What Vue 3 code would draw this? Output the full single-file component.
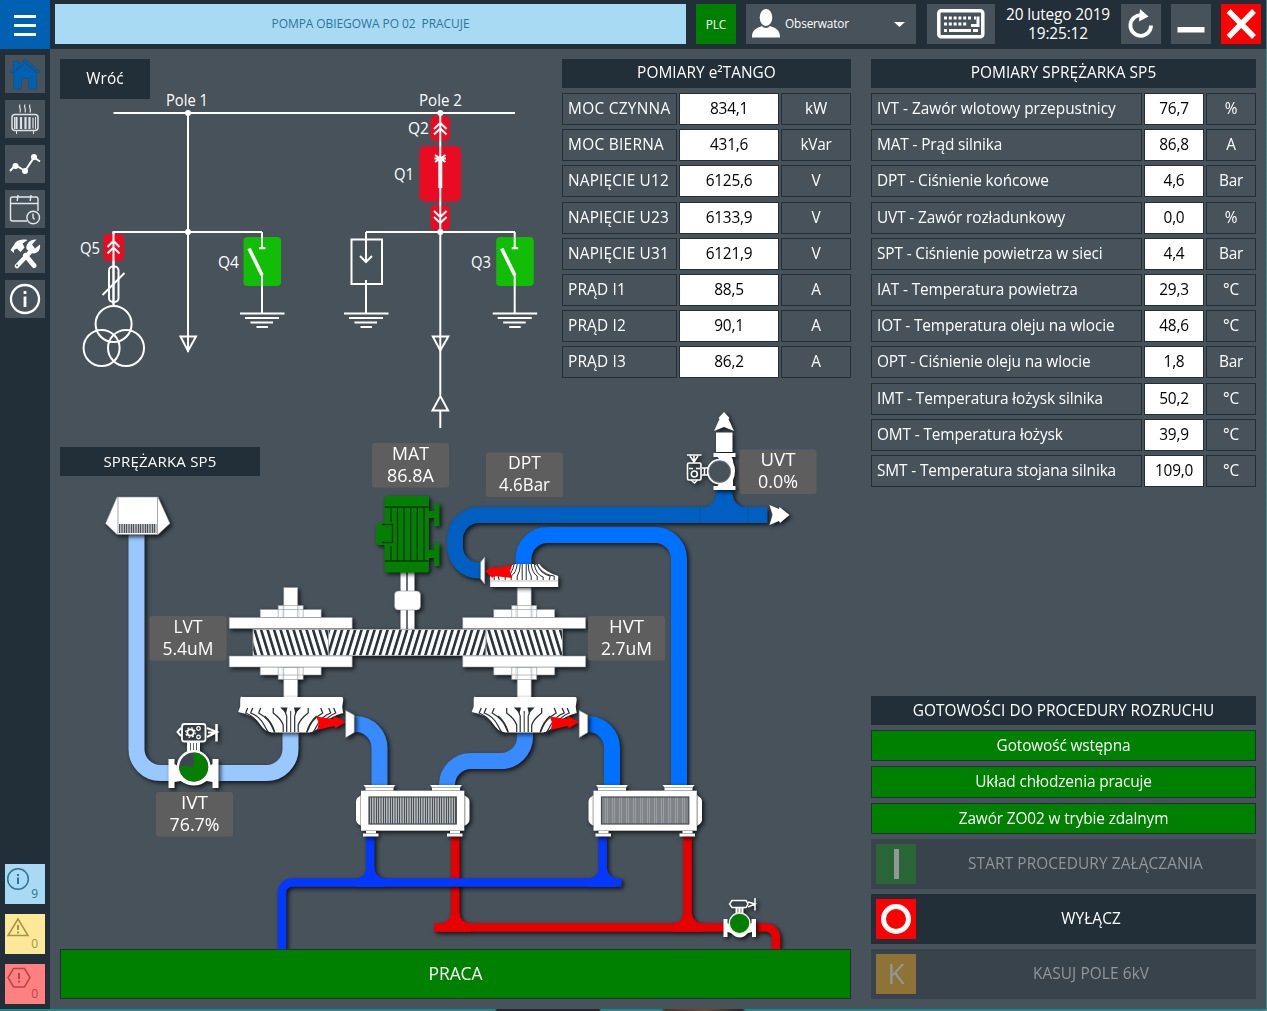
<script setup>
const tango = [
  ['MOC CZYNNA', '834,1', 'kW'],
  ['MOC BIERNA', '431,6', 'kVar'],
  ['NAPIĘCIE U12', '6125,6', 'V'],
  ['NAPIĘCIE U23', '6133,9', 'V'],
  ['NAPIĘCIE U31', '6121,9', 'V'],
  ['PRĄD I1', '88,5', 'A'],
  ['PRĄD I2', '90,1', 'A'],
  ['PRĄD I3', '86,2', 'A'],
]
const compressor = [
  ['IVT - Zawór wlotowy przepustnicy', '76,7', '%'],
  ['MAT - Prąd silnika', '86,8', 'A'],
  ['DPT - Ciśnienie końcowe', '4,6', 'Bar'],
  ['UVT - Zawór rozładunkowy', '0,0', '%'],
  ['SPT - Ciśnienie powietrza w sieci', '4,4', 'Bar'],
  ['IAT - Temperatura powietrza', '29,3', '°C'],
  ['IOT - Temperatura oleju na wlocie', '48,6', '°C'],
  ['OPT - Ciśnienie oleju na wlocie', '1,8', 'Bar'],
  ['IMT - Temperatura łożysk silnika', '50,2', '°C'],
  ['OMT - Temperatura łożysk', '39,9', '°C'],
  ['SMT - Temperatura stojana silnika', '109,0', '°C'],
]
const ready = ['Gotowość wstępna', 'Układ chłodzenia pracuje', 'Zawór ZO02 w trybie zdalnym']

// Value plates placed on the process diagram: x, y, name, value, widths of both texts
const plates = [
  [372, 443, 'MAT', '86.8A', 37, 47],
  [486, 452.5, 'DPT', '4.6Bar', 33, 51],
  [739.5, 449.5, 'UVT', '0.0%', 35, 40],
  [149.5, 616, 'LVT', '5.4uM', 29, 51],
  [588, 616, 'HVT', '2.7uM', 35, 51],
  [156, 792, 'IVT', '76.7%', 27, 50],
]
// Labels of the single line diagram: text, x, y, width
const labels = [
  ['Pole 1', 166, 106, 42],
  ['Pole 2', 419, 106, 43],
  ['Q2', 408, 134, 21],
  ['Q1', 394, 180, 20],
  ['Q5', 80, 254, 20],
  ['Q4', 218, 268, 21],
  ['Q3', 471, 268, 20],
]
const blades = [
  'M-43 708l-2 5q8 3 14 12t9 7',
  'M-38 708l-2 5q9 3 14 13t6 6',
  'M-30 708l-2 5q10 6 13 13t3 6',
  'M-17.500 708v5q8 6 10 12v7',
  'M-26 716q7 6 10 16',
  'M-7 708l3 8v16',
]
const smallBlades = [
  'M-30 580v-4q9 -1 14 -7t6 -5',
  'M-25 580l-1 -4q10 -2 13 -12',
  'M-19 580v-3q7 -2 9 -13',
  'M-13 580v-4q5 -3 6 -12',
  'M-7 580v-4q3 -4 3 -12',
  'M-2 580v-16',
]
</script>

<template>
  <div class="screen">
    <aside class="side">
      <button class="menu"><i></i><i></i><i></i></button>
      <nav>
        <div class="tile">
          <svg viewBox="0 0 40 38"><path fill="#0061b2" stroke="#1d4a75" stroke-width=".6" d="M8.500 17.500L20 8.500l11.500 9V34H23.500V23.500h-7V34H8.500zM20 4.200L35 16.500l-1.600 1.800L20 7.600 6.600 18.300 5 16.500l3.500-3V6h5v3.500z"/></svg>
        </div>
        <div class="tile">
          <svg viewBox="0 0 40 38" fill="none" stroke="#dfe2e4"><rect x="7" y="14.500" width="26" height="16" rx="3" stroke-width="1.500"/><path d="M9.500 17v12M30.500 17v12M11.500 31v3M28.500 31v3"/><path stroke-width="1.200" d="M11 17.500v11h1v-11zM15.500 17.500v11h1v-11zM20 17.500v11h1v-11zM24 17.500v11h1v-11zM28 17.500v11"/><path stroke-width="1.200" d="M15 4.500c-2 3 2 4 0 8M20 4.500c-2 3 2 4 0 8M25 4.500c-2 3 2 4 0 8"/></svg>
        </div>
        <div class="tile">
          <svg viewBox="0 0 40 38" fill="none" stroke="#fff"><path stroke-width="2" d="M5 26l5.500-6 9.500 6L29 12.500l6 4"/><g fill="#fff" stroke="none"><circle cx="10.500" cy="21" r="3"/><circle cx="20" cy="26" r="3"/><circle cx="29" cy="12" r="3"/></g></svg>
        </div>
        <div class="tile">
          <svg viewBox="0 0 40 38" fill="none" stroke="#e4e7e9"><path stroke-width="1.400" d="M22 31H7.500a2 2 0 0 1-2-2V9a2 2 0 0 1 2-2H31a2 2 0 0 1 2 2v12M5.500 13.500H33M13 5l-.8 6M26 5l-.8 6"/><circle cx="28.200" cy="27.500" r="6.300" stroke-width="1.400"/><path stroke-width="1.400" d="M28 23.500v4l1.500 2"/></svg>
        </div>
        <div class="tile">
          <svg viewBox="0 0 40 38" stroke="#fff" stroke-linecap="round"><path fill="none" stroke-width="5" d="M20.500 20.500l8.500 10"/><path fill="#fff" stroke="none" d="M5.500 15l5-7.500c3-3 8-3.500 12-2.500l-5 3.500 2 4-4 4.500-3.500-3.500-3 1.500v3z"/><path stroke-width="4.500" d="M12 31L27 15"/><path fill="#fff" stroke="none" d="M31.500 4.500L27 9.500l3 4 5-4c1 7-4 10-9 8.500L21.500 14c-1-5 3.500-10 10-9.500z"/><circle cx="12" cy="30.500" r="1" fill="#47525b" stroke="none"/></svg>
        </div>
        <div class="tile">
          <svg viewBox="0 0 40 38" fill="none" stroke="#fff"><circle cx="20" cy="19" r="14" stroke-width="2.300"/><path stroke-width="2.800" d="M20 16.500V27M20 11v3"/></svg>
        </div>
      </nav>
      <div class="alerts">
        <div class="alert info"><svg viewBox="0 0 40 40" fill="none" stroke="#2f7396" stroke-width="1.500"><circle cx="13" cy="15" r="10.300"/><path stroke-width="2" d="M13 13.500v6.500M13 10v2"/></svg><span>9</span></div>
        <div class="alert warn"><svg viewBox="0 0 40 40" fill="none" stroke="#a39642" stroke-width="1.500"><path d="M13 5L23 21.500H3z"/><path stroke-width="2" d="M13 11v5M13 17.500v2"/></svg><span>0</span></div>
        <div class="alert err"><svg viewBox="0 0 40 40" fill="none" stroke="#b54646" stroke-width="1.500"><path d="M8.500 4.500h11l5.500 9-5.500 9.500h-11L3 13.500z"/><path stroke-width="2" d="M14 9v6M14 16.500v2"/></svg><span>0</span></div>
      </div>
    </aside>

    <div class="body">
      <header>
        <div class="message">POMPA OBIEGOWA PO 02&nbsp; PRACUJE</div>
        <div class="plc">PLC</div>
        <div class="user">
          <svg width="28" height="30" viewBox="0 0 28 30" fill="#fff"><ellipse cx="14" cy="8.500" rx="6.300" ry="8.500"/><path d="M0 28.500c0-7 3-9 10-11.500 2 2.500 6 2.500 8 0 7 2.500 10 4.500 10 11.500z"/></svg>
          <span>Obserwator</span>
          <svg class="caret" width="11" height="5" viewBox="0 0 11 5"><path fill="#fff" d="M0 0h11L5.500 5z"/></svg>
        </div>
        <div class="keyboard">
          <svg width="48" height="30" viewBox="0 0 48 30"><rect x="1.800" y="1.800" width="44" height="26" rx="2.500" fill="none" stroke="#fff" stroke-width="3.500"/><g fill="none" stroke="#fff" stroke-width="3"><path stroke-dasharray="3 1.800" d="M7 9h28"/><path stroke-dasharray="3 1.800" d="M7 15h24"/><path d="M7 21.500h3M12 21.500h22M36 21.500h5M41 7.500v9h-7M37 9h2"/></g></svg>
        </div>
        <div class="clock"><div>20 lutego 2019</div><div>19:25:12</div></div>
        <div class="sq">
          <svg viewBox="0 0 40 40"><path fill="none" stroke="#fff" stroke-width="3.800" d="M30 21.500A10.300 10.300 0 1 1 21 11.300"/><path fill="#fff" d="M19 5l8.500 7.500-9.500 5z"/></svg>
        </div>
        <div class="sq"><svg viewBox="0 0 40 40"><rect x="6.500" y="23" width="27" height="5.500" fill="#fff"/></svg></div>
        <div class="sq close"><svg viewBox="0 0 40 40"><path stroke="#fff" stroke-width="5.500" d="M7.500 7L33 33M33 7L7.500 33"/></svg></div>
      </header>

      <main>
        <section class="left">
          <div class="stage">
            <svg class="mimic" viewBox="60 59 791 890" width="791" height="890">
              <defs>
                <pattern id="gearL" width="6.500" height="26" patternUnits="userSpaceOnUse" patternTransform="translate(253 629) skewX(17)"><rect width="6.500" height="26" fill="#fff"/><rect width="2.700" height="26" fill="#263038"/></pattern>
                <pattern id="gearR" width="6.500" height="26" patternUnits="userSpaceOnUse" patternTransform="translate(328 629) skewX(-17)"><rect width="6.500" height="26" fill="#fff"/><rect width="2.700" height="26" fill="#263038"/></pattern>
                <pattern id="grill" width="7" height="30" patternUnits="userSpaceOnUse"><rect width="7" height="30" fill="#b4b8bb"/><path stroke="#4b5156" d="M.5 0v30M3 0v30M5.500 0v30"/></pattern>
                <g id="ground"><path d="M-22 313.500h44.500M-17 318h34M-11.500 322.500h22.500M-5.500 327h11.500"/></g>
                <g id="switch"><rect x="-18.500" y="237" width="37.500" height="49" rx="4" fill="#12bd06" stroke="none"/><path d="M0 232v16M-3 248.300h6.500M0 274v39"/><path stroke-width="3.600" d="M-13 248.500L0 275"/></g>
                <g id="hub" fill="#fff" stroke="#8b9298" stroke-width=".6">
                  <path d="M-30.500 609.500h61v8h-61zM-12.500 605.500h25v12h-25zM-7 587.500H7v30H-7zM-30.500 667h61v8h-61zM-12.500 667h25v12.500h-25zM-7 667H7v31H-7z"/>
                  <path d="M-61.500 617.500h123v11h-123zM-61.500 656h123v11h-123z"/>
                  <path stroke="#ccc" d="M-8.500 606v11M8.500 606v11M-8.500 668v11M8.500 668v11"/>
                </g>
                <g id="impeller">
                  <path fill="#fff" d="M-49 697H51q1.500 0 1.500 3l-1 7 1 6q-12 3-19 10t-13 9.500H-20q-6-1-12-9.500t-20.500-11l2-5.500v-6q0-4 1.500-4z"/>
                  <g id="halfBlades" fill="none" stroke="#252c32" stroke-width="1.200"><path v-for="b in blades" :key="b" :d="b"/><path fill="#252c32" d="M-9 708h5l-1 4z"/></g>
                  <use href="#halfBlades" transform="scale(-1 1)"/>
                  <path stroke="#252c32" d="M0 711v21"/>
                  <path fill="#f00" d="M25.500 716.500l17 2.500 1-3L55 722l-10 6-2-2-16.500 4 1.500-7z"/>
                  <path fill="#fff" stroke="#99a0a5" stroke-width=".6" d="M55 710.500l8.500 4.500v17.500l-8.500 5z"/>
                </g>
                <g id="cooler">
                  <path fill="#fff" d="M363.500 785h32l-2 2.500v3h-28v-3zM430 785h32l-2 2.500v3h-28v-3zM366 831h10v2.500h2.500v3h-15.500v-3h3zM450 831h10v2.500h2.500v3h-15.500v-3h3zM361 795.500q-5 2-5 6v18q0 4 5 6zM464.500 795.500q5 2 5 6v18q0 4-5 6z"/>
                  <path fill="none" stroke="#8b9298" stroke-width=".7" d="M365 787.500h29M431.500 787.500h29M365 833.500h12M449 833.500h12M360.500 795v31M465 795v31"/>
                  <rect x="361" y="790.700" width="103.300" height="40" fill="#fff"/>
                  <rect x="369" y="797" width="87.300" height="27" fill="url(#grill)" stroke="#444a4f" stroke-width="1.200"/>
                </g>
              </defs>

              <g fill="none" stroke="#fff" stroke-width="2">
                <path d="M113.500 113H515M188 113v239M113.500 306v-74H262"/>
                <rect x="103.500" y="234" width="20.500" height="27" rx="4.500" fill="#e90b22" stroke="none"/>
                <path d="M113.500 232v74M107.500 247l6-6 6 6M107.500 253.500l6-6 6 6"/>
                <rect x="109" y="266.500" width="9.500" height="35.500" rx="4"/>
                <path d="M102.500 295L124.500 273M180.500 336.500h15.500L188 351z"/>
                <circle cx="113.600" cy="324" r="18"/><circle cx="101.600" cy="348" r="18"/><circle cx="126" cy="348" r="18"/>
                <use href="#switch" x="262"/><use href="#ground" x="262"/>
                <g fill="#e90b22" stroke="none"><rect x="430.500" y="116" width="19.500" height="25" rx="4.500"/><rect x="419.500" y="146" width="41.500" height="55.500" rx="5"/><rect x="430.500" y="205" width="19.500" height="25" rx="4.500"/></g>
                <path d="M440.300 113v282M440.300 411v17M366 232H515M434 129l6.300-6 6.300 6M434 134.500l6.300-6 6.300 6M434 211l6.300 6 6.300-6M434 217l6.300 6 6.300-6M435 155l10.500 7M445.500 155l-10.500 7M434.500 158.500h11.500"/>
                <path stroke-width="4" d="M440.300 160v28"/>
                <path d="M351.500 239.500h30.500v44.500h-30.500zM366 232v30M360 256l6 6 6-6M366 280v33M432.800 336.500h15.500l-8 14zM440.300 396l7.800 14.500h-15.600z"/>
                <use href="#ground" x="366"/><use href="#switch" x="514.700"/><use href="#ground" x="514.700"/>
                <g fill="#fff" stroke="none"><circle cx="188" cy="113" r="3"/><circle cx="188" cy="232" r="3"/><circle cx="440.300" cy="113" r="3"/><circle cx="440.300" cy="232" r="3"/></g>
              </g>
              <text v-for="l in labels" :key="l[0]" class="lbl" :x="l[1]" :y="l[2]" :textLength="l[3]" lengthAdjust="spacingAndGlyphs">{{ l[0] }}</text>

              <g class="shade" fill="none" stroke-width="16">
                <path stroke="#98c8ff" d="M136.500 534V749A24 24 0 0 0 160.500 773H170M218 773H266.500A24 24 0 0 0 290.500 749V732"/>
                <path stroke="#378aff" d="M354 724H356A24 24 0 0 1 379.500 748V786M525 732V737A24 24 0 0 1 501 761H471A24 24 0 0 0 447 785V786"/>
                <path stroke="#0070ff" d="M587 724H589A24 24 0 0 1 612 748V786M523.500 565V559A24 24 0 0 1 547.500 535H655A24 24 0 0 1 679 559V786"/>
                <path stroke="#005fc1" d="M481 570.500H479A24 24 0 0 1 455 546.500V539A24 24 0 0 1 479 515H767.500"/>
                <path fill="#005fc1" d="M716 490h16.500q0 17.500 15.500 17.500v2h-48v-2q16 0 16-17.500z"/>
              </g>
              <path stroke="#0553a3" stroke-width=".7" d="M700 507v16M748 507v16"/>

              <g class="shade">
                <g fill="none" stroke="#e80000" stroke-width="8.500">
                  <path d="M455.300 836V924M687.600 836V924M434 927.500H725M755 927.500H766A10 10 0 0 1 776 937.500V949"/>
                  <path id="teeRed" fill="#e80000" stroke="none" d="M451 913h8.500q1 8 7 9.500l4 1v8.500h-30.500v-8.500l4-1q6-1.500 7-9.500z"/><use href="#teeRed" x="232.400"/>
                </g>
              </g>
              <g class="shade">
                <g fill="none" stroke="#0538ff" stroke-width="8.500">
                  <path d="M370.200 836V880M602.700 836V880M621.500 882.500H292A10 10 0 0 0 282 892.500V949"/>
                  <path id="teeBlue" fill="#0538ff" stroke="none" d="M366 868h8.500q1 8 7 9.500l3 1v8.500h-28v-8.500l3-1q6-1.500 6.500-9.500z"/><use href="#teeBlue" x="232.500"/>
                </g>
              </g>

              <g class="shade">
                <path fill="#fff" stroke="#8b9298" stroke-width=".6" d="M117 497h41l12 26.500-12 11h-41l-11.500-11z"/>
                <path fill="none" stroke="#a3a8ac" d="M118 497v37M157.500 497v37"/>
                <rect x="119" y="524" width="37.500" height="9" fill="url(#grill)"/>
              </g>

              <g class="shade">
                <path fill="#fff" d="M400.500 572h14v57h-14z"/><path stroke="#68717a" stroke-width="2" d="M407 572v57"/>
                <rect x="394.500" y="591" width="26" height="19" rx="4" fill="#fff" stroke="#8b9298" stroke-width=".6"/>
              </g>
              <g class="shade">
                <rect x="253" y="629" width="309" height="27" fill="#fff"/>
                <use href="#hub" x="290.700"/><use href="#hub" x="524.200"/>
              </g>
              <g stroke="#a3a8ac" stroke-width=".8"><rect x="253" y="629.500" width="75.500" height="26" fill="url(#gearL)"/><rect x="328.500" y="629.500" width="157.500" height="26" fill="url(#gearR)"/><rect x="486" y="629.500" width="76.500" height="26" fill="url(#gearL)"/></g>
              <g class="shade"><use href="#impeller" x="290.700"/></g>
              <g class="shade"><use href="#impeller" x="524.200"/></g>

              <g class="shade">
                <g transform="translate(524.200 0)">
                  <path fill="#fff" d="M-12 564h27q6 8 19 12v11h-68v-11q14-2 22-12z"/>
                  <path stroke="#aaa" stroke-width=".7" d="M-34 581h68"/>
                  <g id="smallHalf" fill="none" stroke="#252c32"><path v-for="b in smallBlades" :key="b" :d="b"/></g>
                  <use href="#smallHalf" transform="scale(-1 1)"/>
                  <path fill="#f00" d="M-39 571l8-5 1 2 18-3-2 6 2 7-18-2-2 2z"/>
                  <path fill="#fff" stroke="#99a0a5" stroke-width=".6" d="M-39.500 557v27l-4-5v-17z"/>
                </g>
              </g>

              <g class="shade" fill="#047f04">
                <rect x="384.500" y="496" width="44.500" height="76.500" rx="2.500"/>
                <rect x="376" y="523" width="17" height="22" rx="3"/>
                <path d="M429 511h5v-7.500h5.500V526H434v-8h-5zM429 550h5v-7h5.500v23H434v-8h-5z"/>
              </g>
              <path stroke="#07380c" stroke-width="1.300" fill="none" d="M385 507h43.500M385 561h43.500M391 507v15M391 546v15M397.500 507v54M404 507v54M410.700 507v54M417.300 507v54M424 507v54M382 524.500h10.500v18H382"/>

              <g class="shade">
                <path fill="#fff" d="M168.500 759h6v5l5 3h28l5-3v-5h6v29h-6v-6l-6-1q-12 9-26 0l-6 1v6h-6zM187 741.500h13v10h-13z"/>
                <path fill="none" stroke="#59636b" d="M190.500 743v8M193.500 743v8M196.500 743v8"/>
                <circle cx="193.700" cy="767" r="15.700" fill="#3c474f" stroke="#fff" stroke-width="2.400"/>
                <path fill="#047f04" d="M193.700 767V752.500A14.500 14.500 0 1 1 179.300 765.500z"/>
                <g fill="none" stroke="#fff"><rect x="182" y="724" width="23.500" height="17.500" rx="2.500" stroke-width="1.800"/><path stroke-width="2" d="M181 728l-3.500 4 3.500 4M207 728l10 4-10 5M208 732.500h8"/><path stroke-width="2.500" d="M216.500 724v17.500"/><circle cx="190.500" cy="732.500" r="3.200" stroke-width="1.800"/><circle cx="190.500" cy="732.500" r="4.700" stroke-width="1.300" stroke-dasharray="1.800 1.900"/><circle cx="198.500" cy="728.500" r="1.800" stroke-width="1.300"/><circle cx="198.500" cy="737" r="1.800" stroke-width="1.300"/></g>
              </g>

              <g class="shade">
                <path fill="#fff" d="M724 412l5.500 6-1 1 5.500 12-10-4-10 4 5.500-12-1-1zM716 432.500h16.500V452H716zM713.500 453h22v4h-4q2 3 1.500 5 4 9 0 18v6h2.500v4h-22v-4h4l4-6v-18l-4-5h-4z"/>
                <circle cx="719.700" cy="471.600" r="12" fill="#47525b" stroke="#fff" stroke-width="1.800"/>
                <circle cx="719.700" cy="471.600" r="10.800" fill="none" stroke="#7b858c" stroke-width=".7"/>
                <g fill="none" stroke="#fff" stroke-width="1.600"><rect x="687.500" y="463" width="13.500" height="17" rx="1.500"/><path d="M702 468h6M702 475h6M704.500 468v7M687 455h14.500M690 456l4 6 4-6M694 456v7M691 480l3.500 3 3-3M689 468.500h4M696 468.500h4"/><circle cx="694.300" cy="474" r="3"/></g>
              </g>
              <g class="shade"><path fill="#fff" d="M769.500 505l9.500 4 .5-2 10 8-9.500 8-1-2-9.500 4 3-10z"/></g>

              <g class="shade"><use href="#cooler"/></g>
              <g class="shade"><use href="#cooler" x="232.500"/></g>

              <g class="shade">
                <path fill="#fff" d="M723.500 919h4v4l3 2h17l4-2v-4h4.500v18H752v-5l-4 1q-8 9-17 0l-3.500-1v5h-4zM735.500 908h8v6h-8z"/>
                <path stroke="#68717a" d="M738 908v5M741 908v5"/>
                <circle cx="739.600" cy="923.300" r="10.300" fill="#047f04" stroke="#e9e9e9" stroke-width="1.400"/>
                <path fill="none" stroke="#fff" stroke-width="1.500" d="M732 900.500h14l2 3.500-2 3.500h-14l-2.500-3.500zM748 902l7 2-7 3M755 898v12.500"/>
              </g>

              <g v-for="p in plates" :key="p[2]">
                <rect :x="p[0]" :y="p[1]" width="77" height="44.500" rx="2.500" fill="#5e5e5e"/>
                <text class="plate" :x="p[0] + 38.500 - p[4] / 2" :y="p[1] + 16.800" :textLength="p[4]" lengthAdjust="spacingAndGlyphs">{{ p[2] }}</text>
                <text class="plate" :x="p[0] + 38.500 - p[5] / 2" :y="p[1] + 38.800" :textLength="p[5]" lengthAdjust="spacingAndGlyphs">{{ p[3] }}</text>
              </g>
            </svg>

            <button class="back">Wróć</button>
            <h2 class="unit">SPRĘŻARKA SP5</h2>
            <div class="table tango">
              <h2>POMIARY e²TANGO</h2>
              <div v-for="r in tango" :key="r[0]" class="row"><div>{{ r[0] }}</div><div class="val">{{ r[1] }}</div><div class="u">{{ r[2] }}</div></div>
            </div>
          </div>
          <div class="praca">PRACA</div>
        </section>

        <section class="right">
          <div class="table comp">
            <h2>POMIARY SPRĘŻARKA SP5</h2>
            <div v-for="r in compressor" :key="r[0]" class="row"><div>{{ r[0] }}</div><div class="val">{{ r[1] }}</div><div class="u">{{ r[2] }}</div></div>
          </div>
          <div class="actions">
            <h2>GOTOWOŚCI DO PROCEDURY ROZRUCHU</h2>
            <div v-for="r in ready" :key="r" class="ok">{{ r }}</div>
            <div class="act off start"><svg width="40" height="40"><rect width="40" height="40" fill="#2a6535"/><rect x="18" y="5" width="5" height="30" fill="#91979b"/></svg><span>START PROCEDURY ZAŁĄCZANIA</span></div>
            <div class="act"><svg width="40" height="40"><rect width="40" height="40" fill="#f00"/><circle cx="20" cy="20" r="12.500" fill="none" stroke="#fff" stroke-width="5"/></svg><span>WYŁĄCZ</span></div>
            <div class="act off"><b>K</b><span>KASUJ POLE 6kV</span></div>
          </div>
        </section>
      </main>
    </div>
  </div>
</template>

<style>
body { margin: 0; background: #47525b; }
</style>

<style scoped>
.screen {
  box-sizing: border-box; width: 1267px; height: 1011px; display: flex; overflow: hidden;
  background: linear-gradient(90deg, #268585 0 495px, #24272b 497px 599px, #268585 601px 661px, #4a3029 665px, #6b4a38 705px, #24272b 742px, #268585 746px 1260px, #4c8a88);
  padding: 0 1px 2px 0;
  color: #fff; font-family: "Open Sans", "Noto Sans", sans-serif; font-size: 15.4px; letter-spacing: -.13px;
}
.side { width: 50px; background: #232f38; display: flex; flex-direction: column; }
.menu { width: 50px; height: 49px; border: 0; background: #0061b2; padding: 2px 14px 0; display: flex; flex-direction: column; justify-content: center; gap: 6px; }
.menu i { height: 3px; background: #fff; }
nav { padding: 6px 5px; display: flex; flex-direction: column; gap: 7px; }
.tile { height: 38px; background: #47525b; }
.tile svg, .alert svg, .sq svg { display: block; width: 100%; height: 100%; }
.alerts { margin-top: auto; padding: 0 5px 5px; display: flex; flex-direction: column; gap: 10px; }
.alert { height: 40px; position: relative; }
.alert span { position: absolute; right: 7px; bottom: 2px; font-size: 12px; line-height: 16px; }
.info { background: #a8dbf3; color: #2f7396; }
.warn { background: #fbe999; color: #a39642; }
.err { background: #ff8080; color: #b54646; }
.body { flex: 1; display: flex; flex-direction: column; background: #47525b; min-width: 0; }
header { height: 40px; padding: 4px 5px 5px; background: #232f38; display: flex; }
header > div { display: flex; align-items: center; justify-content: center; }
.message { width: 631px; background: #a8dbf3; color: #2f7396; font-size: 12px; font-weight: 500; letter-spacing: -.08px; margin-right: 10px; }
header > .message, header > .plc { padding-bottom: 1px; height: 39px; }
.plc { width: 40px; background: #008000; font-size: 11.800px; margin-right: 10px; }
header .user { width: 170px; box-sizing: border-box; background: #47525b; padding: 0 11px 0 6px; justify-content: flex-start; font-size: 11.800px; margin-right: 11px; }
.user span { margin: 0 0 2px 5px; }
.caret { margin-left: auto; }
.keyboard { width: 68px; background: #47525b; }
header .clock { flex: 1; flex-direction: column; line-height: 19px; padding-bottom: 1px; height: 39px; }
.sq { width: 40px; background: #47525b; margin-left: 10px; }
.clock + .sq { margin-left: 0; }
.sq.close { background: #f00; }
main { flex: 1; display: flex; justify-content: space-between; padding: 10px 10px 10px; min-height: 0; }
.left { width: 791px; display: flex; flex-direction: column; }
.stage { height: 890px; display: grid; grid-template-columns: 502px 289px; grid-template-rows: 388px 502px; }
.mimic { grid-area: 1 / 1 / 3 / 3; display: block; }
.shade { filter: drop-shadow(2px 2px 2px rgba(0, 0, 0, .75)); }
.lbl { fill: #fff; font-size: 15.400px; letter-spacing: 0; }
.plate { fill: #fff; font-size: 17.600px; letter-spacing: 0; }
.back { grid-area: 1 / 1; width: 90px; height: 40px; border: 0; background: #232f38; color: #fff; font: inherit; letter-spacing: .1px; padding-bottom: 3px; }
h2 { margin: 0; height: 29px; line-height: 28px; background: #232f38; text-align: center; font-size: inherit; font-weight: 400; letter-spacing: .04px; }
.unit { grid-area: 2 / 1; width: 200px; font-size: 15px; letter-spacing: .2px; }
.tango { grid-area: 1 / 2; }
.table { display: flex; flex-direction: column; gap: 5px; }
.row { display: grid; gap: 2px; height: 31.200px; }
.tango .row { grid-template-columns: 115px 100px 70px; }
.tango .row > :first-child { letter-spacing: .18px; }
.tango .row:nth-child(2) > :first-child, .tango .row:nth-child(3) > :first-child { letter-spacing: .3px; }
.comp .row { grid-template-columns: 271px 60px 50px; }
.comp .row:nth-child(2) > :first-child { letter-spacing: 0; }
.row > div { border: 1px solid #232f38; padding-left: 5px; line-height: 30px; white-space: nowrap; }
.row > .val, .row > .u { padding: 0; text-align: center; letter-spacing: -.25px; }
.row > .val { background: #fff; color: #000; }
.praca { height: 50px; box-sizing: border-box; border: 1px solid #232f38; background: #008000; text-align: center; line-height: 46px; font-size: 17.500px; }
.right { width: 385px; display: flex; flex-direction: column; justify-content: space-between; }
.actions { display: flex; flex-direction: column; gap: 5px; }
.actions h2 { line-height: 30px; }
.ok { height: 31.300px; box-sizing: border-box; border: 1px solid #232f38; background: #008000; text-align: center; line-height: 30px; }
.act { height: 50px; box-sizing: border-box; padding: 5px; display: flex; background: #232f38; line-height: 39px; font-size: 15.400px; letter-spacing: .1px; }
.act span { flex: 1; text-align: center; padding-left: 15px; }
.start span { padding-left: 4px; }
.act svg, .act b { flex: none; }
.off { background: #38434c; color: #91979b; }
.act b { width: 40px; height: 40px; background: #8f7336; text-align: center; font-weight: 400; font-size: 28px; line-height: 38px; }
</style>
